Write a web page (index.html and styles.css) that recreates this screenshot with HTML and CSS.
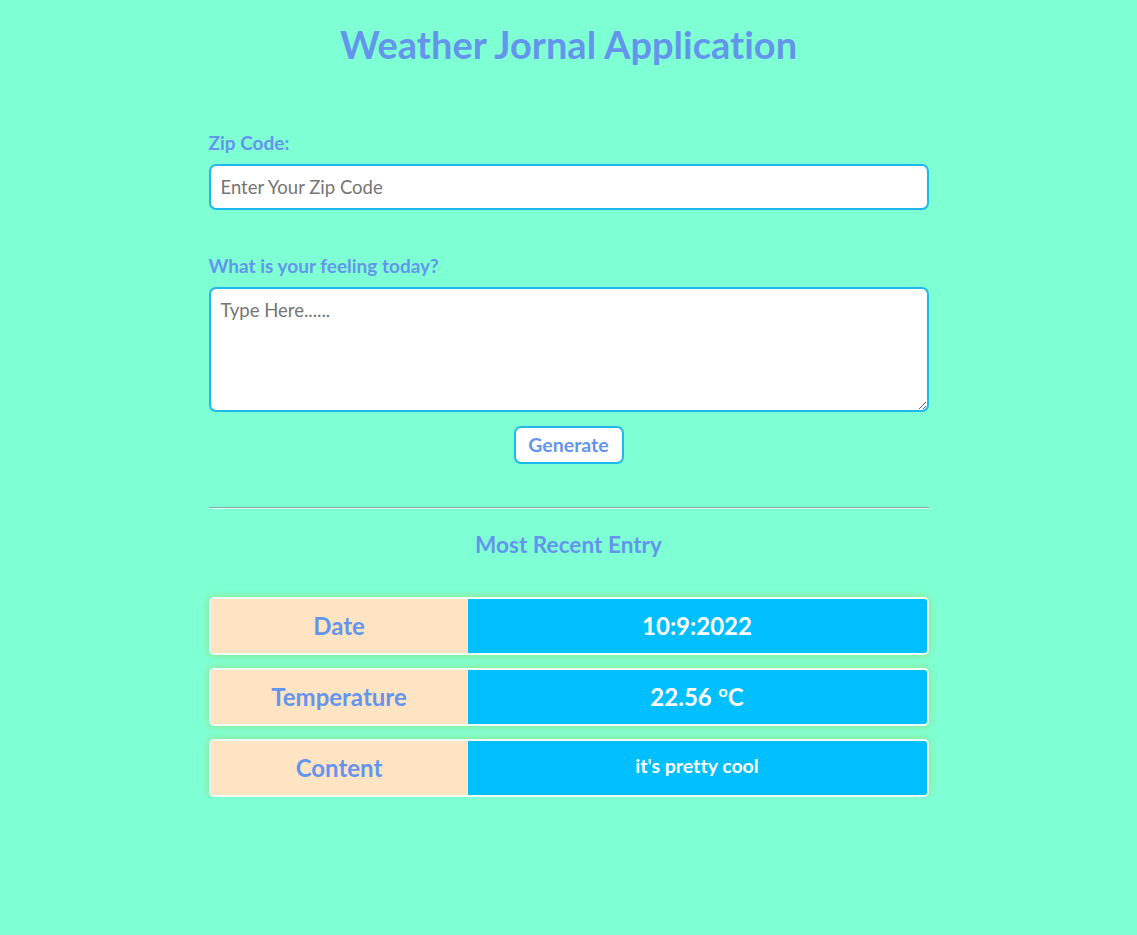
FILE: index.html
```html
<!DOCTYPE html>
<html lang="en">
<head>
<meta charset="utf-8">
<title>Weather Journal</title>
<link rel="stylesheet" href="styles.css">
</head>
<body>
<h1 class="title">Weather Jornal Application</h1>
<main class="app">
  <div class="field">
    <label class="label" for="zip">Zip Code:</label>
    <input class="input" id="zip" type="text" placeholder="Enter Your Zip Code">
  </div>
  <div class="field field-feel">
    <label class="label" for="feelings">What is your feeling today?</label>
    <textarea class="textarea" id="feelings" placeholder="Type Here......"></textarea>
  </div>
  <div class="actions">
    <button class="btn" type="button">Generate</button>
  </div>
  <hr class="divider">
  <h2 class="subtitle">Most Recent Entry</h2>
  <section class="entries">
    <div class="entry">
      <div class="entry-key">Date</div>
      <div class="entry-val"><span>10:9:2022</span></div>
    </div>
    <div class="entry">
      <div class="entry-key">Temperature</div>
      <div class="entry-val"><span>22.56 <span class="deg">o</span>C</span></div>
    </div>
    <div class="entry">
      <div class="entry-key">Content</div>
      <div class="entry-val entry-val-small"><span>it's pretty cool</span></div>
    </div>
  </section>
</main>
</body>
</html>
```
FILE: styles.css
```css
* { box-sizing: border-box; }
body {
  margin: 0;
  background: #7fffd4;
  color: #6495ed;
  font-family: Lato, "Open Sans", sans-serif;
  font-variant-ligatures: none;
}
.title {
  margin: 0;
  padding-top: 22px;
  font-size: 38px;
  line-height: 45.6px;
  font-weight: 700;
  text-align: center;
}
.app {
  width: 720px;
  margin: 0 auto;
  padding-top: 65px;
}
.field {
  display: flex;
  flex-direction: column;
}
.field-feel { margin-top: 46px; }
.label {
  font-size: 19px;
  line-height: 20px;
  font-weight: 700;
  margin-bottom: 11px;
}
.input, .textarea {
  width: 720px;
  border: 2px solid #1eb8ec;
  border-radius: 7px;
  background: #fff;
  font-family: inherit;
  font-size: 18.5px;
  color: #333;
  padding: 0 10px;
  outline: none;
}
.input { height: 46px; }
.textarea {
  height: 125px;
  padding: 10px;
  line-height: 1.2;
  resize: vertical;
}
.input::placeholder, .textarea::placeholder { color: #757575; }
.actions {
  display: flex;
  justify-content: center;
  margin-top: 14px;
}
.btn {
  width: 110px;
  height: 38px;
  border: 2px solid #1eb8ec;
  border-radius: 7px;
  background: #fff;
  color: #6495ed;
  font-family: inherit;
  font-size: 19.5px;
  font-weight: 700;
  padding: 0;
}
.divider {
  margin: 43px 0 0;
  border: 0;
  border-top: 1px solid #8fa8a0;
  border-bottom: 1px solid #d6fff0;
}
.subtitle {
  margin: 22px 0 0;
  font-size: 22.6px;
  line-height: 28px;
  font-weight: 700;
  text-align: center;
}
.entries {
  display: flex;
  flex-direction: column;
  gap: 13px;
  margin-top: 38px;
}
.entry {
  display: grid;
  grid-template-columns: 257px 1fr;
  height: 58px;
  border: 2px solid #effff4;
  border-radius: 5px;
  overflow: hidden;
  box-shadow: 0 0 7px 1px #8ee88e;
}
.entry-key, .entry-val {
  display: flex;
  align-items: center;
  justify-content: center;
  font-size: 24px;
  line-height: 30px;
  font-weight: 700;
}
.entry-key { background: #ffe4c4; color: #6495ed; }
.entry-val { background: #00bfff; color: #fff; }
.entry-val-small { font-size: 19.5px; padding-bottom: 3px; }
.deg {
  font-size: 16px;
  line-height: 0;
  vertical-align: 9px;
  margin-left: 1px;
}
```
